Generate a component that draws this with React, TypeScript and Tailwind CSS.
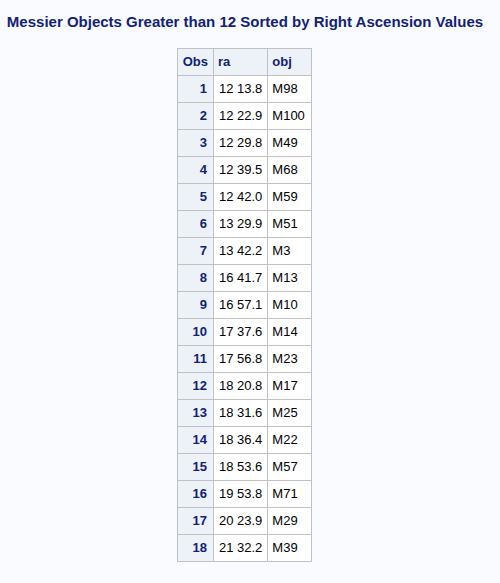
const rows: [number, string, string][] = [
  [1, '12 13.8', 'M98'],
  [2, '12 22.9', 'M100'],
  [3, '12 29.8', 'M49'],
  [4, '12 39.5', 'M68'],
  [5, '12 42.0', 'M59'],
  [6, '13 29.9', 'M51'],
  [7, '13 42.2', 'M3'],
  [8, '16 41.7', 'M13'],
  [9, '16 57.1', 'M10'],
  [10, '17 37.6', 'M14'],
  [11, '17 56.8', 'M23'],
  [12, '18 20.8', 'M17'],
  [13, '18 31.6', 'M25'],
  [14, '18 36.4', 'M22'],
  [15, '18 53.6', 'M57'],
  [16, '19 53.8', 'M71'],
  [17, '20 23.9', 'M29'],
  [18, '21 32.2', 'M39'],
];

export default function App() {
  return (
    <div className="min-h-[583px] bg-[#fafbfe] font-['Liberation_Sans',Arial,sans-serif]">
      {/* Title */}
      <h1 className="pt-[13px] pr-[10px] text-center text-[15px] leading-[18px] font-bold whitespace-nowrap text-[#112277]">
        Messier Objects Greater than 12 Sorted by Right Ascension Values
      </h1>

      {/* Data table */}
      <div className="flex justify-center pt-[17px] pr-[11px]">
        <table className="border-collapse border border-[#c1c1c1] text-[13px] whitespace-nowrap">
          <thead>
            <tr className="h-[27px] bg-[#edf2f9] text-[#112277] font-bold">
              <th className="w-[35px] border border-[#c1c1c1] px-[5px] text-left">Obs</th>
              <th className="w-[54px] border border-[#c1c1c1] px-[4px] text-left">ra</th>
              <th className="w-[44px] border border-[#c1c1c1] px-[4px] text-left">obj</th>
            </tr>
          </thead>
          <tbody>
            {rows.map(([n, ra, obj]) => (
              <tr key={n} className="h-[27px]">
                <td className="border border-[#c1c1c1] bg-[#edf2f9] px-[6px] text-right font-bold text-[#112277]">{n}</td>
                <td className="border border-[#c1c1c1] bg-white px-[5px] text-black">{ra}</td>
                <td className="border border-[#c1c1c1] bg-white px-[4px] text-black">{obj}</td>
              </tr>
            ))}
          </tbody>
        </table>
      </div>
    </div>
  );
}
